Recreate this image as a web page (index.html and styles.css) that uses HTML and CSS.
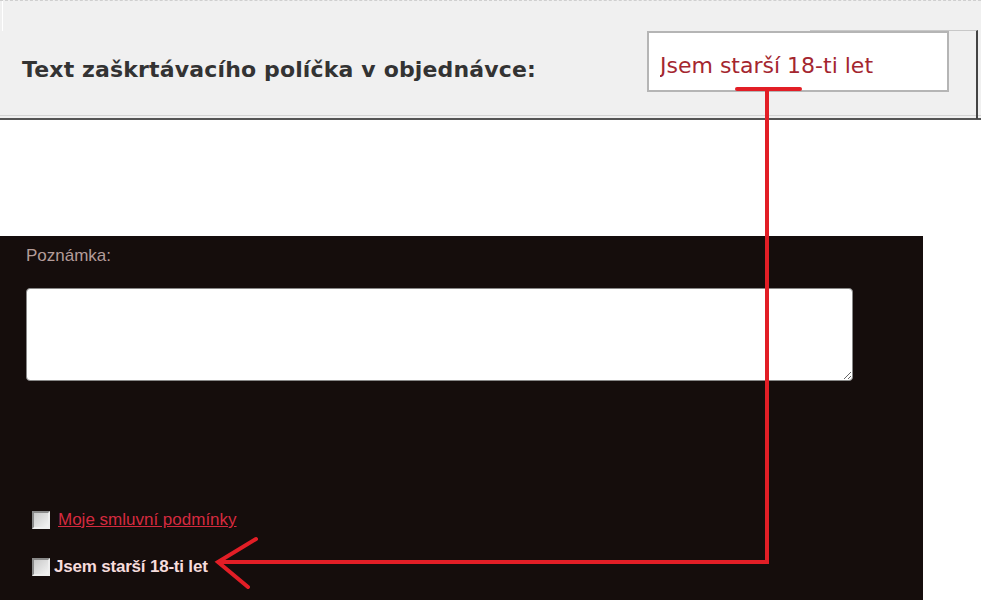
FILE: index.html
```html
<!DOCTYPE html>
<html lang="cs">
<head>
    <meta charset="UTF-8">
    <title>Text zaškrtávacího políčka</title>
    <link rel="stylesheet" href="styles.css">
</head>
<body>
    <div id="settings">
        <div class="settings-row">
            <label class="settings-label" for="checkbox-text">Text zaškrtávacího políčka v objednávce:</label>
            <input type="text" id="checkbox-text" value="Jsem starší 18-ti let">
        </div>
    </div>

    <div id="order-form">
        <div class="note-label">Poznámka:</div>
        <textarea id="note"></textarea>

        <div class="checks">
            <label class="check"><input type="checkbox"><a href="#">Moje smluvní podmínky</a></label>
            <label class="check check-age"><input type="checkbox"><span>Jsem starší 18-ti let</span></label>
        </div>
    </div>

    <!-- annotation arrow drawn over the screenshot -->
    <svg id="arrow" width="981" height="600" viewBox="0 0 981 600">
        <g fill="none" stroke="#e21e26" stroke-width="4" stroke-linecap="round" stroke-linejoin="miter">
            <path d="M737 89 H800"/>
            <path d="M767 89 V562 H222"/>
            <path d="M256 539 L218 562 L248 587"/>
        </g>
    </svg>
</body>
</html>
```

FILE: styles.css
```css
html, body {
    margin: 0;
    padding: 0;
    background: #fff;
    width: 981px;
    height: 600px;
    overflow: hidden;
}

body {
    position: relative;
    font-family: Arial, "Liberation Sans", sans-serif;
}

#settings {
    height: 117px;
    background-color: #f0f0f0;
    border-top: 1px dashed #cfcfcf;
    border-bottom: 2px solid #555;
    box-shadow: inset 0 -2px 0 #f0f0f0, inset 0 -3px 0 #d4d4d4;
    position: relative;
}

#settings::before {
    content: "";
    position: absolute;
    left: 2px;
    top: 0;
    height: 30px;
    border-left: 1px solid #fff;
}

#settings::after {
    content: "";
    position: absolute;
    left: 810px;
    top: 29px;
    width: 166px;
    height: 88px;
    border-top: 1px solid #c8c8c8;
    border-right: 2px solid #444;
}

.settings-row {
    display: flex;
    align-items: center;
    padding: 30px 0 0 22px;
}

.settings-label {
    font-family: "DejaVu Sans", Verdana, sans-serif;
    font-weight: bold;
    font-size: 22px;
    color: #333;
    letter-spacing: 0.15px;
    width: 625px;
    padding-top: 16px;
}

#checkbox-text {
    width: 302px;
    height: 61px;
    box-sizing: border-box;
    margin: 0;
    padding: 8px 0 0 11px;
    border: 2px solid #b5b5b5;
    background: #fff;
    font-family: "DejaVu Sans", Verdana, sans-serif;
    font-size: 22px;
    color: #a4262f;
    letter-spacing: 0;
    outline: none;
}

#order-form {
    margin-top: 116px;
    width: 923px;
    height: 364px;
    background-color: #150d0c;
    padding: 11px 0 0 26px;
    box-sizing: border-box;
}

.note-label {
    color: #b39c99;
    font-size: 17px;
    line-height: 18px;
}

#note {
    display: block;
    margin-top: 23px;
    width: 827px;
    height: 93px;
    box-sizing: border-box;
    border: 1px solid #888;
    border-radius: 4px;
    background: #fff;
    resize: vertical;
}

.checks {
    padding: 129px 0 0 6px;
    display: flex;
    flex-direction: column;
    gap: 27px;
}

.check {
    display: flex;
    align-items: center;
    height: 20px;
    font-size: 17px;
}

.check input {
    appearance: none;
    width: 18px;
    height: 18px;
    box-sizing: border-box;
    margin: 0 8px 0 0;
    border: 2px solid #8a8a8a;
    border-right-color: #eee;
    border-bottom-color: #eee;
    background: linear-gradient(135deg, #c9c9c9, #f2f2f2);
}

.check a {
    color: #d42a3f;
    text-decoration: underline;
}

.check-age input {
    margin-right: 4px;
}

.check-age span {
    color: #f6dcdc;
    font-weight: bold;
    font-size: 17px;
    letter-spacing: -0.2px;
}

#arrow {
    position: absolute;
    z-index: 2;
    left: 0;
    top: 0;
    pointer-events: none;
}
```
